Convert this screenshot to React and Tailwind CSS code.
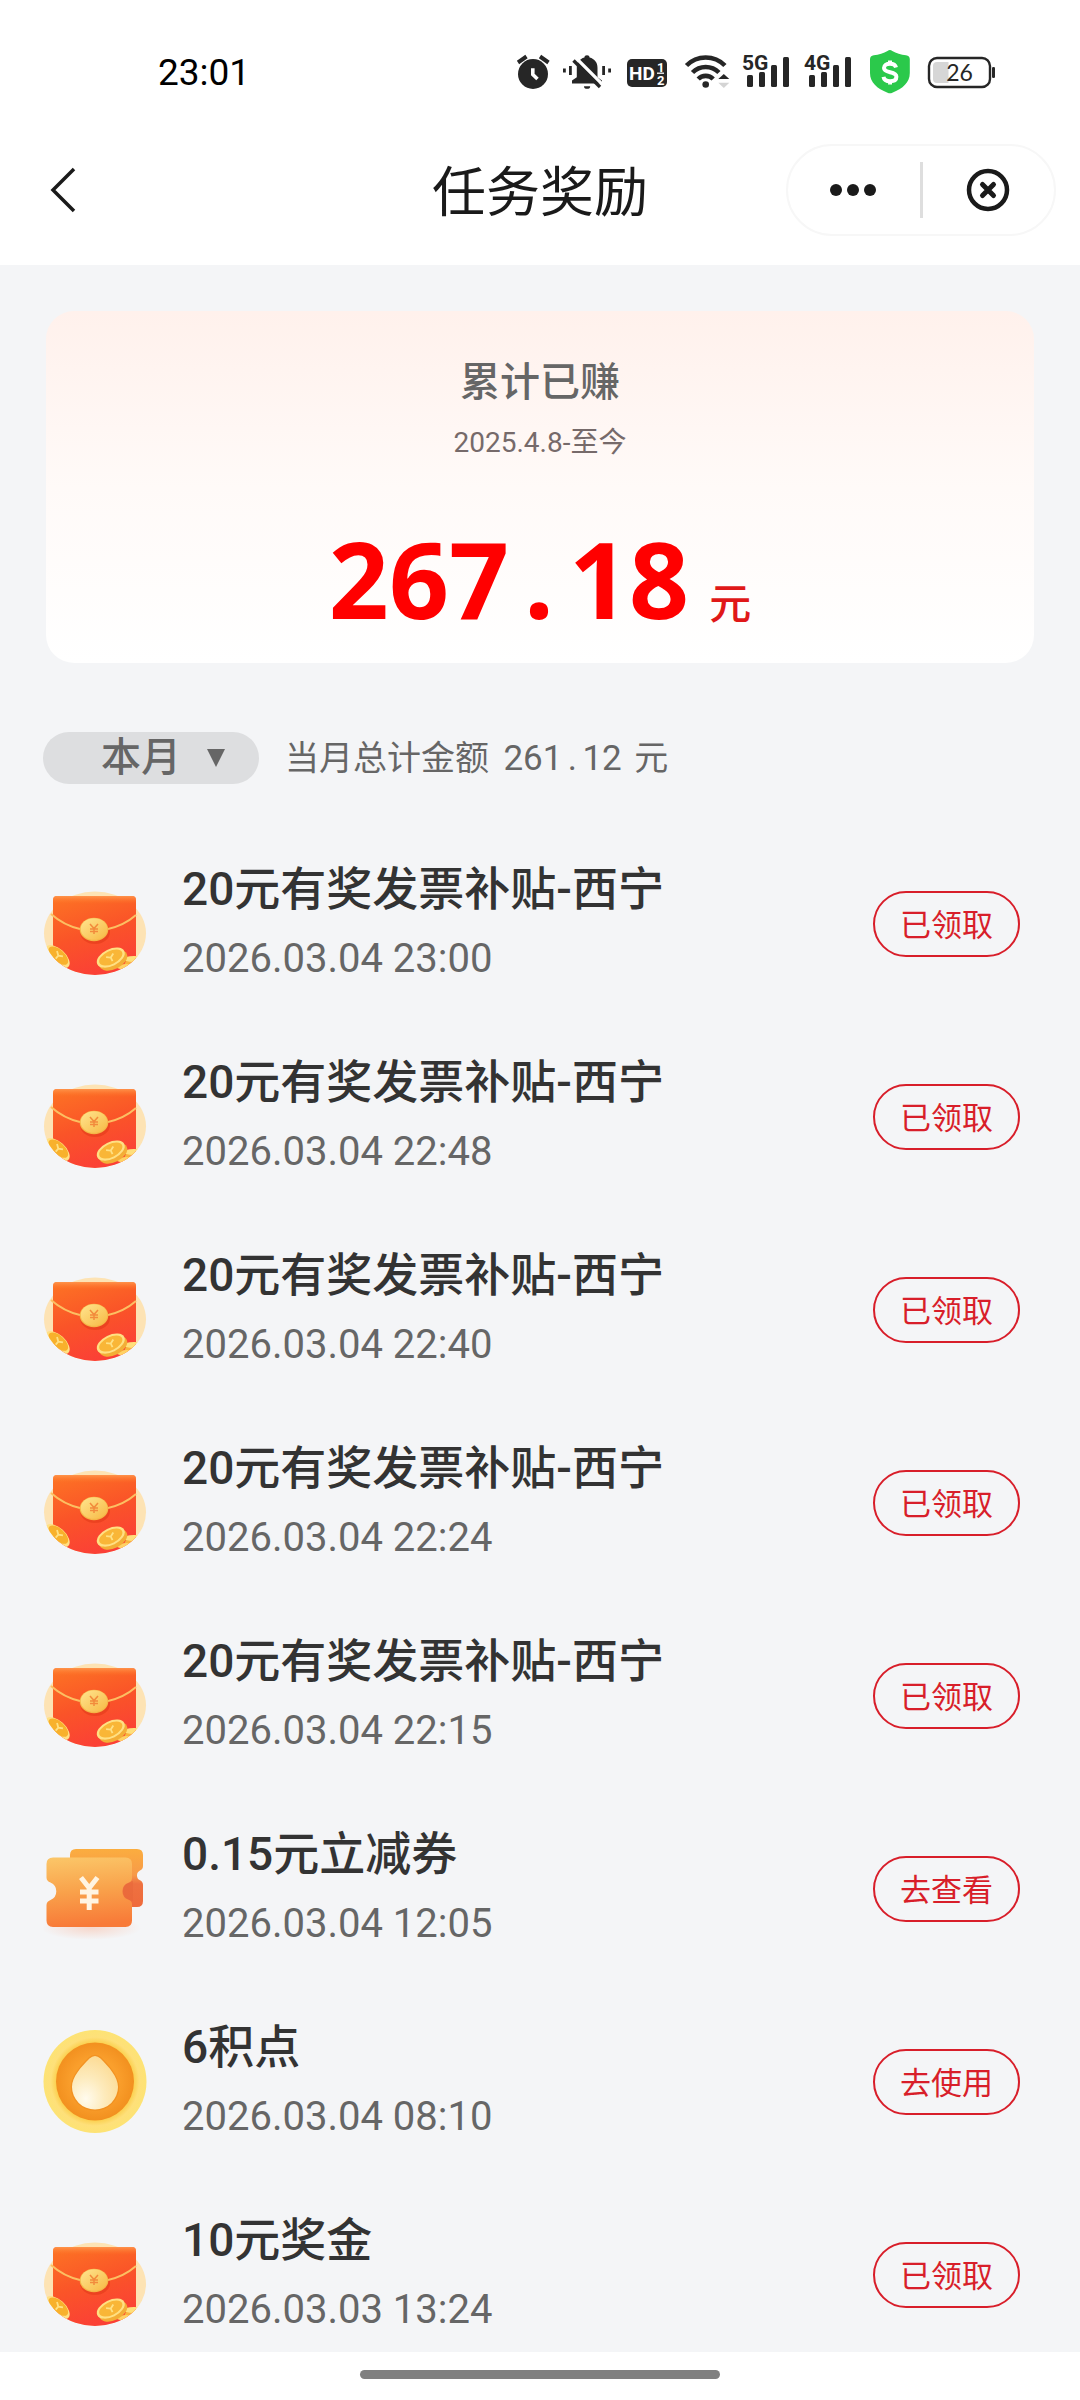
import React from "react";

const INK = "#262626";

function AlarmIcon() {
  return (
    <svg width="34" height="48" viewBox="0 0 34 48" aria-hidden="true">
      <circle cx="17" cy="26" r="15" fill={INK} />
      <path d="M2 14.5 10.5 8.5M24 8.5 32.5 14.5" stroke={INK} strokeWidth="4" fill="none" />
      <path d="M16.8 20.3V26.5L21.5 31" stroke="#fff" strokeWidth="3.6" fill="none" />
    </svg>
  );
}

function MutedBellIcon() {
  return (
    <svg width="50" height="48" viewBox="0 0 50 48" aria-hidden="true">
      <path
        d="M25 7.3c1.6 0 2.4.9 2.6 2.2 5 1.3 7.9 5 7.9 10.2v9.5l4.5 3.4v2.8H10v-2.8l4.8-3.4v-9.5c0-5.2 2.9-8.9 7.6-10.2.2-1.3 1-2.2 2.6-2.2z"
        fill={INK}
      />
      <path d="M22 38.2h6.2a3.1 2.6 0 0 1-6.2 0z" fill={INK} />
      <path d="M14.5 10.5 41 37" stroke="#fff" strokeWidth="3.2" />
      <path d="M11.5 12.5 38 39" stroke={INK} strokeWidth="3.4" />
      <path d="M1 20.5h2.8v4H1zM7 18h2.8v9H7zM40.2 18H43v9h-2.8zM46.2 20.5H49v4h-2.8z" fill={INK} />
    </svg>
  );
}

function HdIcon() {
  return (
    <svg width="48" height="48" viewBox="0 0 48 48" role="img" aria-label="HD 1/2">
      <rect x="3" y="11" width="40" height="28" rx="5" fill={INK} />
      <g fill="#fff" fontFamily="Roboto, sans-serif" fontWeight="700">
        <text x="5" y="32" fontSize="19">HD</text>
        <text x="33" y="23.5" fontSize="13">1</text>
        <text x="33" y="36.5" fontSize="13">2</text>
      </g>
      <path d="M33 25.2h7" stroke="#fff" strokeWidth="1.3" />
    </svg>
  );
}

function WifiIcon() {
  return (
    <svg width="46" height="48" viewBox="0 0 46 48" aria-hidden="true">
      <g fill="none" stroke={INK} strokeWidth="4.6">
        <path d="M2.5 17.5a27 27 0 0 1 38.4 0" />
        <path d="M8.5 24.5a18.6 18.6 0 0 1 26.4 0" />
        <path d="M14.2 31a10.5 10.5 0 0 1 15 0" />
      </g>
      <circle cx="21.7" cy="36.5" r="3.3" fill={INK} />
      <path d="M34.3 31h11l-5.5-5z" fill={INK} />
      <path d="M34.3 34.8h11l-5.5 5.2z" fill="#d4d4d4" />
    </svg>
  );
}

function SignalIcon({ label }) {
  return (
    <svg width="50" height="48" viewBox="0 0 50 48" role="img" aria-label={label}>
      <text x="0" y="22" fontSize="21" fontWeight="700" fontFamily="Roboto, sans-serif" fill={INK}>
        {label}
      </text>
      <g fill={INK}>
        <rect x="5" y="27" width="6" height="12" rx="1.5" />
        <rect x="17" y="24" width="6" height="15" rx="1.5" />
        <rect x="29" y="17" width="6" height="22" rx="1.5" />
        <rect x="41" y="9" width="6" height="30" rx="1.5" />
      </g>
    </svg>
  );
}

function ShieldIcon() {
  return (
    <svg width="48" height="48" viewBox="0 0 48 48" aria-hidden="true">
      <path
        d="M21.5 2.9q2.4-1.7 4.8 0C30 5.2 35 6.7 40 7.2q3.8.4 3.8 4V25c0 9.5-7 15.5-17.5 19.8q-2.4 1-4.7 0C11 40.5 4 34.5 4 25V11.2q0-3.6 3.8-4C12.8 6.7 17.8 5.2 21.5 2.9z"
        fill="#2bc94b"
      />
      <path
        d="M30 19.5c-.6-2.5-2.8-3.7-6-3.7-3.6 0-6 1.6-6 4.2 0 5.7 12.4 2.7 12.4 8.7 0 2.9-2.5 4.5-6.3 4.5-3.7 0-6.1-1.5-6.6-4.4M24 12.5v3.5M24 33v3.5"
        stroke="#fff"
        strokeWidth="4"
        fill="none"
      />
    </svg>
  );
}

function BatteryIcon() {
  return (
    <svg width="70" height="48" viewBox="0 0 70 48" role="img" aria-label="26%">
      <rect x="3" y="10" width="61" height="29" rx="8" fill="none" stroke={INK} strokeWidth="2.4" />
      <path d="M11 14H22.5V35H11a4 4 0 0 1-4-4V18a4 4 0 0 1 4-4z" fill="#d6d6d6" />
      <rect x="66" y="19" width="3" height="11" rx="1.3" fill={INK} />
      <text x="33.5" y="33" fontSize="23" textAnchor="middle" fontFamily="Lato, sans-serif" fill={INK}>
        26
      </text>
    </svg>
  );
}

function RedPacketIcon() {
  return (
    <svg viewBox="0 0 104 104" className="size-full" aria-hidden="true">
      <defs>
        <linearGradient id="packet" x1="0" y1="0" x2="0.3" y2="1">
          <stop offset="0" stopColor="#fd7424" />
          <stop offset="0.5" stopColor="#fa5428" />
          <stop offset="1" stopColor="#fb3d38" />
        </linearGradient>
        <linearGradient id="packetTop" x1="0" y1="0" x2="0" y2="1">
          <stop offset="0" stopColor="#ff9a52" stopOpacity="0.85" />
          <stop offset="1" stopColor="#ff7424" stopOpacity="0" />
        </linearGradient>
        <linearGradient id="coin" x1="0" y1="0" x2="1" y2="1">
          <stop offset="0" stopColor="#ffe58f" />
          <stop offset="1" stopColor="#f7b944" />
        </linearGradient>
        <clipPath id="packetClip">
          <path d="M0 0H104V61.3H103A51 41.7 0 0 1 1 61.3H0z" />
        </clipPath>
      </defs>
      <ellipse cx="52" cy="61.3" rx="51" ry="41.7" fill="#fde3b4" />
      <g clipPath="url(#packetClip)">
        <rect x="10" y="24" width="83" height="90" rx="4" fill="url(#packet)" />
        <rect x="10" y="24" width="83" height="8" rx="4" fill="url(#packetTop)" />
        <ellipse cx="52" cy="60" rx="15" ry="12" fill="#dc3414" opacity="0.45" />
        <path d="M8 42C17 50 26 54.5 37 57M93 43C85 50 76 54.5 65 57" stroke="#fcbf62" strokeWidth="2" fill="none" />
        <path d="M84 87h20v16H76z" fill="#f9b53d" />
        <ellipse cx="91" cy="87" rx="11" ry="3" fill="#ffdf7c" />
        <ellipse cx="84" cy="95" rx="10" ry="3" fill="#ffd265" />
        <g transform="rotate(42 15 84)">
          <ellipse cx="15" cy="85" rx="15" ry="8" fill="#ffe083" />
          <ellipse cx="15" cy="83.5" rx="12" ry="6" fill="#f8b12c" />
          <path d="M11 81l4 2.5 4-2.5M15 83.500v4" stroke="#ffe083" strokeWidth="1.8" fill="none" />
        </g>
        <g transform="rotate(-26 68 86)">
          <ellipse cx="69" cy="89" rx="15" ry="9" fill="#f3ae36" />
          <ellipse cx="68" cy="85.5" rx="15" ry="8.5" fill="#ffe083" />
          <ellipse cx="68" cy="85.5" rx="12.5" ry="6.5" fill="#f9b637" />
          <path d="M64 83l4 2.5 4-2.5M68 85.5v4" stroke="#ffe083" strokeWidth="1.8" fill="none" />
        </g>
      </g>
      <ellipse cx="51" cy="57.5" rx="14.3" ry="11.7" fill="#f5b548" />
      <ellipse cx="51" cy="57" rx="13.3" ry="10.8" fill="url(#coin)" />
      <path d="M47 52l4 4.5 4-4.5M51 56.5V62M47 57h8M47 59.5h8" stroke="#f28b3c" strokeWidth="1.5" fill="none" />
    </svg>
  );
}

function CouponIcon() {
  return (
    <svg viewBox="0 0 104 104" className="size-full" aria-hidden="true">
      <defs>
        <linearGradient id="ticketBack" x1="0" y1="0" x2="0" y2="1">
          <stop offset="0" stopColor="#fbad3f" />
          <stop offset="0.45" stopColor="#f79a49" />
          <stop offset="0.6" stopColor="#ee7140" />
          <stop offset="1" stopColor="#ef6a3c" />
        </linearGradient>
        <linearGradient id="ticketFront" x1="0.1" y1="0" x2="0.2" y2="1">
          <stop offset="0" stopColor="#fbc668" />
          <stop offset="0.5" stopColor="#f9a24b" />
          <stop offset="1" stopColor="#f87a38" />
        </linearGradient>
        <radialGradient id="ticketShadow">
          <stop offset="0" stopColor="#f8b9a0" stopOpacity="0.5" />
          <stop offset="1" stopColor="#f8b9a0" stopOpacity="0" />
        </radialGradient>
      </defs>
      <ellipse cx="48" cy="91" rx="50" ry="12" fill="url(#ticketShadow)" />
      <path
        d="M33 12H94q6 0 6 6V29q0 3-3 4.5a5.5 5.5 0 0 0 0 9.8q3 1.5 3 4.700V64q0 6-6 6H33q-6 0-6-6V18q0-6 6-6z"
        fill="url(#ticketBack)"
      />
      <path d="M90 44c-6 1-10 5-10 10s4 9 10 10z" fill="#e8683a" opacity="0.6" />
      <path
        d="M10 20.5H82.5q6.500 0 6.500 6.500V41q0 3.500-3.500 4.800a9 9 0 0 0 0 17q3.500 1 3.500 4.500V83.500q0 6.500-6.500 6.500H10q-6.500 0-6.500-6.500V68q0-3.500 4-5a9.500 9.500 0 0 0 0-17.500q-4-1.500-4-5V27q0-6.500 6.500-6.500z"
        fill="url(#ticketFront)"
      />
      <path d="M38 40.5 46.2 51 54.5 40.5M46.2 51V73M37 55H55.5M37 64H55.5" stroke="#fff4e2" strokeWidth="5" fill="none" />
    </svg>
  );
}

function PointsIcon() {
  return (
    <svg viewBox="0 0 104 104" className="size-full" aria-hidden="true">
      <defs>
        <radialGradient id="rim">
          <stop offset="0.75" stopColor="#fbd04f" />
          <stop offset="0.86" stopColor="#fee07a" />
          <stop offset="1" stopColor="#fde374" />
        </radialGradient>
        <radialGradient id="disc">
          <stop offset="0.6" stopColor="#fa9f2c" />
          <stop offset="1" stopColor="#f2901f" />
        </radialGradient>
        <radialGradient id="drop" cx="0.3" cy="0.8" r="0.8">
          <stop offset="0" stopColor="#fffbee" />
          <stop offset="0.5" stopColor="#fdebbd" />
          <stop offset="1" stopColor="#fcdc97" />
        </radialGradient>
      </defs>
      <circle cx="52" cy="51.5" r="51.5" fill="url(#rim)" />
      <circle cx="52" cy="51.5" r="39" fill="url(#disc)" />
      <path
        d="M46.5 28.5Q52 23.5 57.5 28.5C66 37 75 47 75 57A23 22.5 0 0 1 29 57C29 47 38 37 46.5 28.5z"
        fill="#f08c1c"
        stroke="#ee8a1c"
        strokeWidth="2.5"
        opacity="0.6"
      />
      <path
        d="M46.5 28.5Q52 23.5 57.5 28.5C66 37 75 47 75 57A23 22.5 0 0 1 29 57C29 47 38 37 46.5 28.5z"
        fill="url(#drop)"
      />
    </svg>
  );
}

const ICONS = { packet: RedPacketIcon, coupon: CouponIcon, points: PointsIcon };

const REWARDS = [
  { icon: "packet", title: "20元有奖发票补贴-西宁", time: "2026.03.04 23:00", action: "已领取" },
  { icon: "packet", title: "20元有奖发票补贴-西宁", time: "2026.03.04 22:48", action: "已领取" },
  { icon: "packet", title: "20元有奖发票补贴-西宁", time: "2026.03.04 22:40", action: "已领取" },
  { icon: "packet", title: "20元有奖发票补贴-西宁", time: "2026.03.04 22:24", action: "已领取" },
  { icon: "packet", title: "20元有奖发票补贴-西宁", time: "2026.03.04 22:15", action: "已领取" },
  { icon: "coupon", title: "0.15元立减券", time: "2026.03.04 12:05", action: "去查看" },
  { icon: "points", title: "6积点", time: "2026.03.04 08:10", action: "去使用" },
  { icon: "packet", title: "10元奖金", time: "2026.03.03 13:24", action: "已领取" },
];

function StatusBar() {
  return (
    <div className="flex h-36 items-center justify-between pr-[84px] pl-[158px]">
      <time className="pt-0.5 text-[37px] leading-12 text-black">23:01</time>
      <div className="flex items-center gap-3">
        <AlarmIcon />
        <MutedBellIcon />
        <HdIcon />
        <WifiIcon />
        <SignalIcon label="5G" />
        <SignalIcon label="4G" />
        <ShieldIcon />
        <BatteryIcon />
      </div>
    </div>
  );
}

function NavBar() {
  return (
    <header className="grid grid-cols-[1fr_auto_1fr] items-center px-6 pb-[29px]">
      <button type="button" aria-label="返回" className="ml-4 flex w-12 justify-center">
        <svg width="44" height="48" viewBox="0 0 44 48" fill="none" stroke="#1a1a1a" strokeWidth="3.5">
          <path d="M32 3 11 24 32 45" />
        </svg>
      </button>
      <h1 className="pt-2 text-[54px] leading-[72px] text-[#1a1a1a]">任务奖励</h1>
      <div className="flex h-[92px] w-[270px] items-center justify-self-end rounded-full border-2 border-[#f7f7f7]">
        <button type="button" aria-label="更多" className="flex flex-1 justify-center">
          <svg width="50" height="48" viewBox="0 0 50 48" fill="#1a1a1a">
            <circle cx="7" cy="24" r="6" />
            <circle cx="24" cy="24" r="6" />
            <circle cx="41" cy="24" r="6" />
          </svg>
        </button>
        <span className="h-14 w-[3px] bg-[#dedede]" />
        <button type="button" aria-label="关闭" className="flex flex-1 justify-center">
          <svg width="48" height="48" viewBox="0 0 48 48" fill="none" stroke="#1a1a1a">
            <circle cx="24" cy="24" r="19" strokeWidth="4.5" />
            <path d="M18.5 18.5 29.5 29.5M29.5 18.5 18.5 29.5" strokeWidth="5" strokeLinecap="round" />
          </svg>
        </button>
      </div>
    </header>
  );
}

function TotalCard() {
  return (
    <section className="mx-[46px] flex flex-col items-center rounded-[28px] bg-linear-to-b from-[#fff1ec] via-[#fffaf8] to-white pt-11 pb-8">
      <h2 className="text-[40px] leading-14 font-medium text-[#666]">累计已赚</h2>
      <p className="mt-3 text-[28px] leading-10 text-[#766a6a]">2025.4.8-至今</p>
      <p className="mt-16 flex items-baseline gap-5">
        <span className="font-['Noto_Sans',sans-serif] text-[105px] leading-[104px] font-bold text-[#ff0000]">
          267<span className="inline-block w-15 text-center">.</span>18
        </span>
        <span className="text-[42px] leading-10 font-medium text-[#e01818]">元</span>
      </p>
    </section>
  );
}

function MonthFilter() {
  return (
    <section className="mx-[43px] mt-[69px] flex items-center gap-[26px]">
      <div className="relative flex h-[52px] w-[216px] items-center rounded-full bg-[#dddee0]">
        <select
          aria-label="月份"
          className="h-full w-full appearance-none bg-transparent pl-[58px] text-[40px] leading-[52px] font-medium text-[#666] outline-none"
        >
          <option>本月</option>
        </select>
        <svg width="18" height="18" viewBox="0 0 18 18" className="pointer-events-none absolute right-[34px]">
          <path d="M0 0H18L9 18z" fill="#666" />
        </svg>
      </div>
      <p className="text-[34px] leading-12 text-[#666]">
        当月总计金额{" "}
        <span className="ml-1.5 text-[35px]">
          261<span className="inline-block w-5 text-center">.</span>12
        </span>{" "}
        <span className="ml-1">元</span>
      </p>
    </section>
  );
}

function RewardRow({ icon, title, time, action }) {
  const Icon = ICONS[icon];
  return (
    <li className="flex items-center">
      <span className="size-[104px] shrink-0">
        <Icon />
      </span>
      <div className="ml-[35px] min-w-0 flex-1">
        <h3 className="text-[46px] leading-[70px] font-medium text-[#333]">{title}</h3>
        <p className="text-[40px] leading-[70px] text-[#666]">{time}</p>
      </div>
      <button
        type="button"
        className="h-[66px] w-[147px] rounded-full border-2 border-[#d81e2a] pt-1 text-[31px] leading-10 text-[#d81e2a]"
      >
        {action}
      </button>
    </li>
  );
}

export default function App() {
  return (
    <div className="bg-white font-[Roboto,'Noto_Sans_CJK_SC',sans-serif]" lang="zh-CN">
      <StatusBar />
      <NavBar />
      <main className="bg-[#f4f5f7] pt-[46px] pb-[7px]">
        <TotalCard />
        <MonthFilter />
        <ul className="mt-[70px] flex flex-col gap-[53px] pr-[60px] pl-[43px]">
          {REWARDS.map((reward) => (
            <RewardRow key={reward.time} {...reward} />
          ))}
        </ul>
      </main>
      <footer className="flex h-12 justify-center pt-[18px]">
        <span className="h-[9px] w-1/3 rounded-full bg-[#808080]" />
      </footer>
    </div>
  );
}
